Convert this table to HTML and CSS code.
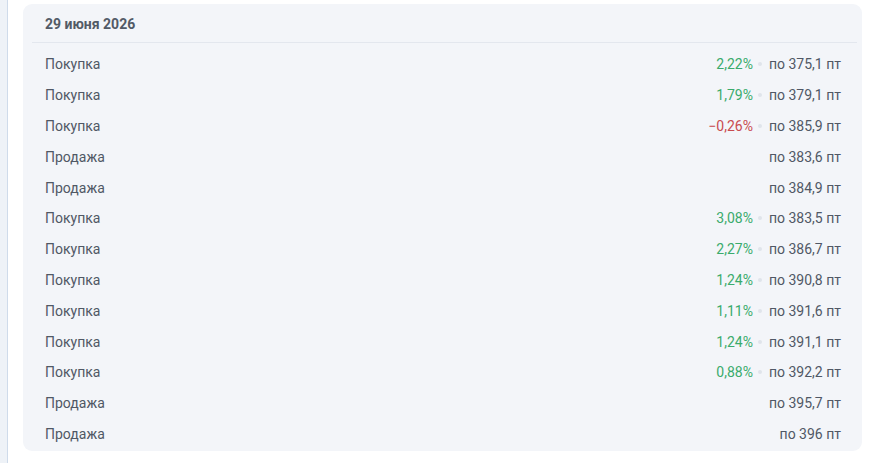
FILE: index.html
```html
<!DOCTYPE html>
<html lang="ru">
<head>
<meta charset="utf-8">
<link rel="stylesheet" href="styles.css">
</head>
<body>
<div class="page">
  <div class="rail"></div>
  <div class="main">
    <div class="card">
      <div class="card-head">29 июня 2026</div>
      <div class="rows">
        <div class="row"><span class="type">Покупка</span><span class="right"><span class="pct up">2,22%</span><span class="dot"></span><span class="price">по 375,1 пт</span></span></div>
        <div class="row"><span class="type">Покупка</span><span class="right"><span class="pct up">1,79%</span><span class="dot"></span><span class="price">по 379,1 пт</span></span></div>
        <div class="row"><span class="type">Покупка</span><span class="right"><span class="pct down">−0,26%</span><span class="dot"></span><span class="price">по 385,9 пт</span></span></div>
        <div class="row"><span class="type">Продажа</span><span class="right"><span class="price">по 383,6 пт</span></span></div>
        <div class="row"><span class="type">Продажа</span><span class="right"><span class="price">по 384,9 пт</span></span></div>
        <div class="row"><span class="type">Покупка</span><span class="right"><span class="pct up">3,08%</span><span class="dot"></span><span class="price">по 383,5 пт</span></span></div>
        <div class="row"><span class="type">Покупка</span><span class="right"><span class="pct up">2,27%</span><span class="dot"></span><span class="price">по 386,7 пт</span></span></div>
        <div class="row"><span class="type">Покупка</span><span class="right"><span class="pct up">1,24%</span><span class="dot"></span><span class="price">по 390,8 пт</span></span></div>
        <div class="row"><span class="type">Покупка</span><span class="right"><span class="pct up">1,11%</span><span class="dot"></span><span class="price">по 391,6 пт</span></span></div>
        <div class="row"><span class="type">Покупка</span><span class="right"><span class="pct up">1,24%</span><span class="dot"></span><span class="price">по 391,1 пт</span></span></div>
        <div class="row"><span class="type">Покупка</span><span class="right"><span class="pct up">0,88%</span><span class="dot"></span><span class="price">по 392,2 пт</span></span></div>
        <div class="row"><span class="type">Продажа</span><span class="right"><span class="price">по 395,7 пт</span></span></div>
        <div class="row"><span class="type">Продажа</span><span class="right"><span class="price">по 396 пт</span></span></div>
      </div>
    </div>
  </div>
</div>
</body>
</html>
```
FILE: styles.css
```css
html, body {
  margin: 0;
  padding: 0;
  background: #ffffff;
}
body {
  font-family: Roboto, "Liberation Sans", Arial, sans-serif;
  color: #505865;
  font-size: 14px;
}
.page {
  display: flex;
  height: 463px;
}
.rail {
  width: 7px;
  background: #eef2f7;
  border-right: 1px solid #cfdbea;
  flex: none;
}
.main {
  flex: 1;
  padding: 4px 7px 0 15px;
}
.card {
  background: #f3f5f9;
  border-radius: 9px;
  height: 447px;
  box-sizing: border-box;
}
.card-head {
  height: 39px;
  box-sizing: border-box;
  padding: 12px 0 0 13px;
  font-weight: 700;
  font-size: 14px;
  color: #525a66;
  border-bottom: 1px solid #e3e7ee;
  margin: 0 5px 0 9px;
}
.rows {
  padding: 6px 21px 0 22px;
}
.row {
  display: flex;
  justify-content: space-between;
  align-items: center;
  height: 30.8px;
}
.right {
  display: flex;
  align-items: center;
}
.pct.up { color: #3aab6c; }
.pct.down { color: #c94b50; }
.dot {
  width: 4px;
  height: 4px;
  border-radius: 50%;
  background: #e0e4eb;
  margin: 0 7px 0 5px;
}
.price { color: #505865; }
```
